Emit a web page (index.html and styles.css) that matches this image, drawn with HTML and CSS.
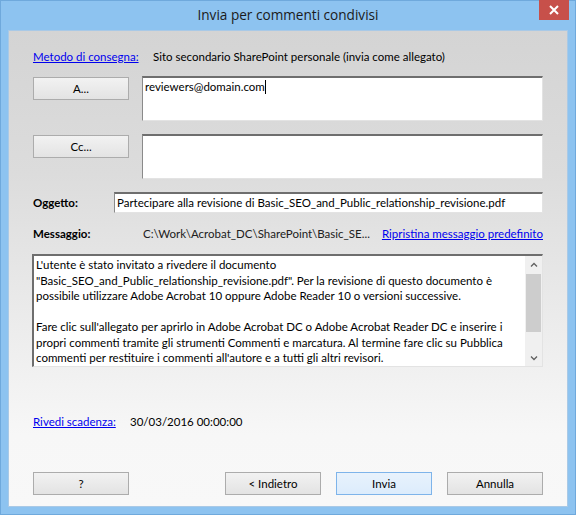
FILE: index.html
```html
<!DOCTYPE html>
<html lang="it">
<head>
<meta charset="utf-8">
<title>Invia per commenti condivisi</title>
<link rel="stylesheet" href="styles.css">
</head>
<body>
<div class="window">
  <div class="titlebar">
    <div class="title">Invia per commenti condivisi</div>
    <div class="close"><svg width="10" height="10" viewBox="0 0 10 10"><path d="M1 1L9 9M9 1L1 9" stroke="#fff" stroke-width="2"/></svg></div>
  </div>
  <div class="client">
    <div class="row r-method">
      <a class="link w-label">Metodo di consegna:</a>
      <span class="text">Sito secondario SharePoint personale (invia come allegato)</span>
    </div>
    <div class="row r-to">
      <button class="btn">A...</button>
      <div class="edit multi">reviewers@domain.com<span class="caret"></span></div>
    </div>
    <div class="row r-cc">
      <button class="btn">Cc...</button>
      <div class="edit multi"></div>
    </div>
    <div class="row r-subject">
      <span class="bold w-subj">Oggetto:</span>
      <div class="edit single">Partecipare alla revisione di Basic_SEO_and_Public_relationship_revisione.pdf</div>
    </div>
    <div class="row r-msg">
      <span class="bold w-msg">Messaggio:</span>
      <span class="text path">C:\Work\Acrobat_DC\SharePoint\Basic_SE...</span>
      <a class="link">Ripristina messaggio predefinito</a>
    </div>
    <div class="edit message">
      <div class="msgtext">
        <p>L'utente è stato invitato a rivedere il documento<br>"Basic_SEO_and_Public_relationship_revisione.pdf". Per la revisione di questo documento è<br>possibile utilizzare Adobe Acrobat 10 oppure Adobe Reader 10 o versioni successive.</p>
        <p>Fare clic sull'allegato per aprirlo in Adobe Acrobat DC o Adobe Acrobat Reader DC e inserire i<br>propri commenti tramite gli strumenti Commenti e marcatura. Al termine fare clic su Pubblica<br>commenti per restituire i commenti all'autore e a tutti gli altri revisori.</p>
      </div>
      <div class="scrollbar">
        <div class="arrow"><svg width="8" height="6" viewBox="0 0 8 6"><path d="M1 4.5L4 1.5L7 4.5" fill="none" stroke="#606060" stroke-width="1.3"/></svg></div>
        <div class="track"><div class="thumb"></div></div>
        <div class="arrow"><svg width="8" height="6" viewBox="0 0 8 6"><path d="M1 1.5L4 4.5L7 1.5" fill="none" stroke="#606060" stroke-width="1.3"/></svg></div>
      </div>
    </div>
    <div class="row r-deadline">
      <a class="link w-dl">Rivedi scadenza:</a>
      <span class="text">30/03/2016 00:00:00</span>
    </div>
    <div class="row r-buttons">
      <button class="btn">?</button>
      <div class="spacer"></div>
      <button class="btn">&lt; Indietro</button>
      <button class="btn default">Invia</button>
      <button class="btn">Annulla</button>
    </div>
  </div>
</div>
</body>
</html>
```

FILE: styles.css
```css
* { box-sizing: border-box; }
html, body { margin: 0; padding: 0; }
body {
  width: 576px;
  height: 515px;
  overflow: hidden;
  font-family: "Lato", "Noto Sans", sans-serif;
  font-size: 11.5px;
  color: #000;
}
.window {
  width: 576px;
  height: 515px;
  background: #8dc3f0;
  border: 1px solid #6fa9dc;
  display: flex;
  flex-direction: column;
}
.titlebar {
  height: 29px;
  display: flex;
  justify-content: center;
  align-items: center;
  position: relative;
}
.title {
  font-family: "Open Sans", "Noto Sans", sans-serif;
  font-size: 13.6px;
  color: #1b1b1b;
  margin-top: -3px;
}
.close {
  position: absolute;
  right: 6px;
  top: -1px;
  width: 30px;
  height: 20px;
  background: #c7504a;
  display: flex;
  align-items: center;
  justify-content: center;
}
.client {
  flex: 1;
  margin: 0 7px 7px 7px;
  border: 1px solid #a9c9e6;
  background: linear-gradient(#d4d4d4 0%, #dcdcdc 30%, #ebebeb 60%, #f7f7f7 85%, #f8f8f8 100%);
  padding: 18px 24px 0 24px;
  display: flex;
  flex-direction: column;
}
.row { display: flex; align-items: flex-start; white-space: nowrap; }
.link { color: #0000ee; text-decoration: underline; cursor: pointer; }
.bold { font-weight: bold; }
.r-method { height: 16px; line-height: 16px; }
.w-label { width: 120px; }
.btn {
  font: inherit;
  width: 96px;
  height: 23px;
  border: 1px solid #acacac;
  background: linear-gradient(#f2f2f2, #e3e3e3);
  color: #000;
  padding: 0;
}
.btn.default {
  background: linear-gradient(#e8f2fc, #dcecfc);
  border-color: #7eb4ea;
}
.edit {
  background: #fff;
  border-top: 2px solid #6e6e6e;
  border-left: 1px solid #8a8a8a;
  border-right: 1px solid #e3e3e3;
  border-bottom: 1px solid #e3e3e3;
}
.multi {
  flex: 1;
  height: 45px;
  margin-left: 13px;
  padding: 0 2px;
  line-height: 18px;
}
.caret { display: inline-block; width: 1px; height: 14px; background: #000; vertical-align: -3px; }
.r-to { margin-top: 11px; }
.r-to .btn { margin-top: 1px; }
.r-cc { margin-top: 13px; }
.r-cc .btn { margin-top: 1px; }
.r-subject { margin-top: 13px; align-items: center; }
.w-subj { width: 81px; }
.single { flex: 1; height: 21px; line-height: 18px; padding: 0 2px; overflow: hidden; }
.r-msg { margin-top: 13px; height: 16px; line-height: 16px; }
.w-msg { width: 110px; }
.path { flex: 1; color: #202020; }
.message {
  margin-top: 12px;
  margin-left: -1px;
  height: 113px;
  display: flex;
  border-left: 2px solid #6e6e6e;
}
.msgtext { flex: 1; padding: 1px 2px; line-height: 15.5px; white-space: nowrap; overflow: hidden; }
.msgtext p { margin: 0 0 15.5px 0; }
.scrollbar {
  width: 17px;
  display: flex;
  flex-direction: column;
  background: #f0f0f0;
}
.arrow { height: 17px; display: flex; align-items: center; justify-content: center; }
.track { flex: 1; padding: 0 1px; }
.thumb { height: 58px; background: #cdcdcd; margin-top: 1px; }
.r-deadline { margin-top: 47px; height: 16px; line-height: 16px; }
.w-dl { width: 97px; }
.r-buttons { margin-top: 42px; }
.spacer { flex: 1; }
.r-buttons .btn + .btn { margin-left: 15px; }
```
